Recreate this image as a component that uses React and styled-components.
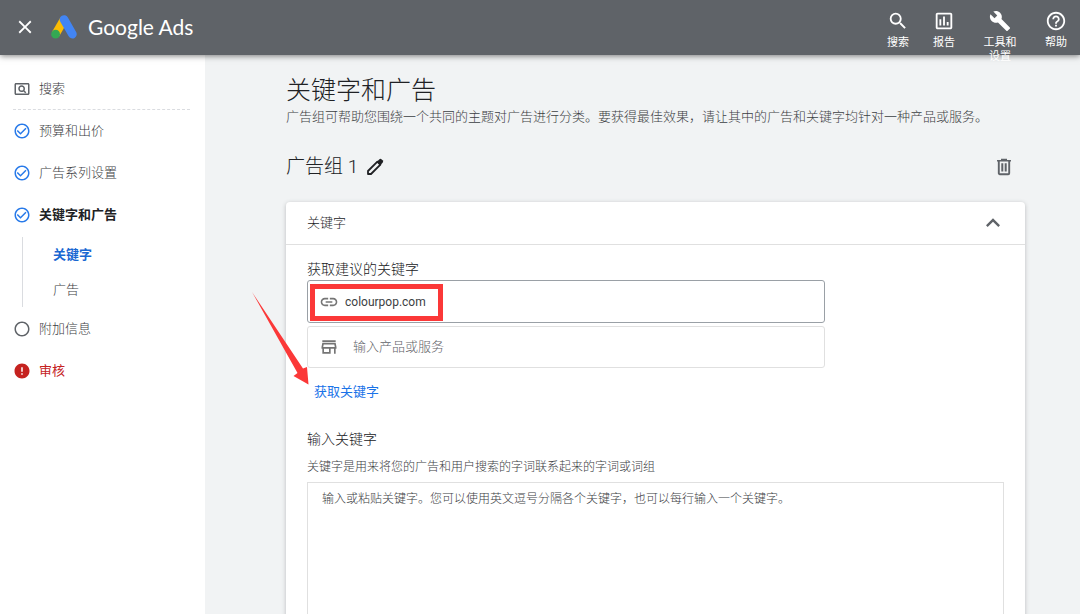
import React from 'react'
import styled, { createGlobalStyle, css } from 'styled-components'
import {
    MdClose,
    MdSearch,
    MdOutlineAssessment,
    MdBuild,
    MdHelpOutline,
    MdOutlinePageview,
    MdCheckCircleOutline,
    MdRadioButtonUnchecked,
    MdError,
    MdLink,
    MdOutlineStore,
    MdExpandLess
} from 'react-icons/md'


const tools = [
    { label: '搜索', Icon: MdSearch },
    { label: '报告', Icon: MdOutlineAssessment },
    { label: '工具和设置', Icon: MdBuild },
    { label: '帮助', Icon: MdHelpOutline }
]

const AdsLogo = () => (
    <svg width="26" height="24" viewBox="0 0 26 24" aria-hidden="true">
        <path d="M13 4.5 L4.6 19.2" stroke="#fbbc04" strokeWidth="8.4" />
        <path d="M13 4.5 L21.4 19.2" stroke="#4285f4" strokeWidth="8.6" strokeLinecap="round" />
        <circle cx="4.6" cy="19.2" r="4.4" fill="#34a853" />
    </svg>
)

const PencilIcon = () => (
    <svg width="18" height="18" viewBox="0 0 18 18" aria-hidden="true">
        <path d="M2 16v-3L11.4 3.6l3 3L5 16z" fill="none" stroke="#202124" strokeWidth="1.8" strokeLinejoin="round" />
        <path d="M10.6 4 13.2 1.4a1.8 1.8 0 0 1 2.5 0l.9.9a1.8 1.8 0 0 1 0 2.5L14 7.4z" fill="#202124" />
    </svg>
)

const TrashIcon = () => (
    <svg width="16" height="18" viewBox="0 0 16 18" fill="none" stroke="#5f6368" aria-hidden="true">
        <path d="M1 2.7h14M5 1.6h6" strokeWidth="1.6" />
        <path d="M2.8 3v12.2a1 1 0 0 0 1 1h8.4a1 1 0 0 0 1-1V3" strokeWidth="1.9" />
        <path d="M6.3 5.2v8.2M9.7 5.2v8.2" strokeWidth="2" />
    </svg>
)

class TopBar extends React.Component{
    render(){
        return(
            <Header>
                <CloseButton type="button" aria-label="关闭"><MdClose size={22}/></CloseButton>
                <AdsLogo/>
                <Brand>Google Ads</Brand>
                <Tools>
                    {tools.map(({ label, Icon }) => (
                        <ToolButton type="button" key={label}>
                            <Icon size={22}/>
                            <span>{label}</span>
                        </ToolButton>
                    ))}
                </Tools>
            </Header>
        )
    }
}

class SideNav extends React.Component{
    render(){
        return(
            <Nav>
                <StepLink href="#search" $divided><MdOutlinePageview size={18} color="#5f6368"/>搜索</StepLink>
                <StepLink href="#budget"><MdCheckCircleOutline size={18} color="#287ae9"/>预算和出价</StepLink>
                <StepLink href="#settings"><MdCheckCircleOutline size={18} color="#287ae9"/>广告系列设置</StepLink>
                <StepLink href="#keywords-ads" $current><MdCheckCircleOutline size={18} color="#287ae9"/>关键字和广告</StepLink>
                <SubSteps>
                    <SubLink href="#keywords" $active>关键字</SubLink>
                    <SubLink href="#ads">广告</SubLink>
                </SubSteps>
                <StepLink href="#extensions"><MdRadioButtonUnchecked size={18} color="#5f6368"/>附加信息</StepLink>
                <StepLink href="#review" $error><MdError size={18} color="#c5221f"/>审核</StepLink>
            </Nav>
        )
    }
}

class KeywordCard extends React.Component{
    state = { url: 'colourpop.com', product: '', keywords: '' }

    handleChange = (e) => {
        this.setState({ [e.target.name]: e.target.value })
    }

    render(){
        const { url, product, keywords } = this.state
        return(
            <Card>
                <CardHeader>
                    <CardTitle>关键字</CardTitle>
                    <IconButton type="button" aria-label="收起"><MdExpandLess size={28} color="#5f6368"/></IconButton>
                </CardHeader>
                <CardBody>
                    <FieldLabel htmlFor="url">获取建议的关键字</FieldLabel>
                    <Suggest>
                        <Field $strong>
                            <MdLink size={20}/>
                            <UrlInput id="url" name="url" value={url} onChange={this.handleChange}/>
                        </Field>
                        <Field $wide>
                            <MdOutlineStore size={20}/>
                            <TextInput name="product" aria-label="输入产品或服务" placeholder="输入产品或服务" value={product} onChange={this.handleChange}/>
                        </Field>
                        <Highlight/>
                        <Arrow width="60" height="96" viewBox="0 0 60 96" aria-hidden="true">
                            <path d="M1 1 L52 77.5 L56 76 L57.5 93.5 L42.5 85 L46.5 82 Z" fill="#fb3838"/>
                        </Arrow>
                    </Suggest>
                    <TextButton type="button">获取关键字</TextButton>
                    <FieldLabel htmlFor="keywords">输入关键字</FieldLabel>
                    <Hint>关键字是用来将您的广告和用户搜索的字词联系起来的字词或词组</Hint>
                    <KeywordArea
                        id="keywords"
                        name="keywords"
                        placeholder="输入或粘贴关键字。您可以使用英文逗号分隔各个关键字，也可以每行输入一个关键字。"
                        value={keywords}
                        onChange={this.handleChange}
                    />
                </CardBody>
            </Card>
        )
    }
}

class App extends React.Component{
    render(){
        return(
            <Page>
                <GlobalStyle/>
                <TopBar/>
                <Content>
                    <SideNav/>
                    <Main>
                        <PageTitle>关键字和广告</PageTitle>
                        <Description>广告组可帮助您围绕一个共同的主题对广告进行分类。要获得最佳效果，请让其中的广告和关键字均针对一种产品或服务。</Description>
                        <GroupRow>
                            <GroupTitle>广告组 1</GroupTitle>
                            <IconButton type="button" aria-label="修改"><PencilIcon/></IconButton>
                            <DeleteButton type="button" aria-label="删除"><TrashIcon/></DeleteButton>
                        </GroupRow>
                        <KeywordCard/>
                    </Main>
                </Content>
            </Page>
        )
    }
}

export default App

const GlobalStyle = createGlobalStyle`
    * {
        box-sizing: border-box;
    }

    body {
        margin: 0;
        font-family: Roboto, "Noto Sans CJK SC", sans-serif;
        font-size: 13px;
        font-weight: 300;
        line-height: 20px;
        color: #3c4043;
    }

    button, input, textarea {
        font: inherit;
        color: inherit;
    }
`

const Page = styled.div`
    display: flex;
    flex-direction: column;
    height: 100vh;
    overflow: hidden;
`

const Header = styled.header`
    position: relative;
    z-index: 1;
    display: flex;
    align-items: center;
    flex: none;
    height: 55px;
    padding: 0 4px 2px 14px;
    background: #5f6368;
    color: #fff;
    box-shadow: 0 1px 6px rgba(0, 0, 0, 0.5);
`

const buttonReset = css`
    display: flex;
    padding: 0;
    border: 0;
    background: none;
    cursor: pointer;
`

const CloseButton = styled.button`
    ${buttonReset}
    margin-right: 15px;
`

const Brand = styled.span`
    margin-left: 11px;
    font-family: Lato, sans-serif;
    font-size: 21px;
    font-weight: 400;
    line-height: 28px;
`

const Tools = styled.div`
    display: flex;
    align-items: flex-start;
    align-self: stretch;
    gap: 6px;
    margin-left: auto;
`

const ToolButton = styled.button`
    ${buttonReset}
    flex-direction: column;
    align-items: center;
    width: 40px;
    padding-top: 10px;
    font-size: 11px;
    font-weight: 400;
    line-height: 14px;

    &:nth-child(n + 3) {
        margin-left: 10px;
    }

    svg {
        flex: none;
    }

    span {
        width: 34px;
        margin-top: 4px;
    }
`

const Content = styled.div`
    display: flex;
    flex: 1;
    min-height: 0;
`

const Nav = styled.nav`
    flex: none;
    width: 205px;
    padding: 13px 15px 0 13px;
    background: #fff;
`

const StepLink = styled.a`
    display: flex;
    align-items: center;
    gap: 8px;
    height: 42px;
    color: ${props => props.$error ? '#c5221f' : props.$current ? '#202124' : '#3c4043'};
    font-weight: ${props => props.$current ? 700 : props.$error ? 400 : 'inherit'};
    text-decoration: none;
    ${props => props.$divided && css`
        border-bottom: 1px dashed #dadce0;
    `}
`

const SubSteps = styled.div`
    margin: 1px 0 1px 9px;
    border-left: 1px solid #dadce0;
`

const SubLink = styled.a`
    display: block;
    padding-left: 30px;
    line-height: 35px;
    color: ${props => props.$active ? '#1967d2' : '#3c4043'};
    font-weight: ${props => props.$active ? 700 : 'inherit'};
    text-decoration: none;
`

const Main = styled.main`
    flex: 1;
    min-width: 0;
    padding: 20px 55px 0 81px;
    background: #f1f3f4;
`

const PageTitle = styled.h1`
    margin: 0;
    font-size: 25px;
    font-weight: inherit;
    line-height: 32px;
    color: #202124;
`

const Description = styled.p`
    margin: 0;
    line-height: 20px;
`

const GroupRow = styled.div`
    display: flex;
    align-items: center;
    gap: 8px;
    height: 30px;
    margin: 25px 0 20px;
`

const GroupTitle = styled.h2`
    margin: 0;
    font-size: 19px;
    font-weight: inherit;
    color: #202124;
`

const IconButton = styled.button`
    ${buttonReset}
`

const DeleteButton = styled(IconButton)`
    margin: 0 13px 0 auto;
`

const Card = styled.section`
    border-radius: 4px;
    background: #fff;
    box-shadow: 0 1px 4px rgba(60, 64, 67, 0.3);
`

const CardHeader = styled.div`
    display: flex;
    align-items: center;
    justify-content: space-between;
    height: 43px;
    padding: 0 18px 0 21px;
    border-bottom: 1px solid #e0e0e0;
`

const CardTitle = styled.h3`
    margin: 0;
    font-size: 13px;
    font-weight: inherit;
    color: #202124;
`

const CardBody = styled.div`
    padding: 14px 21px 21px;
`

const FieldLabel = styled.label`
    display: block;
    font-size: 14px;
    line-height: 20px;
    color: #202124;
`

const Suggest = styled.div`
    position: relative;
    display: flex;
    flex-direction: column;
    gap: 3px;
    max-width: 518px;
    margin-top: 1px;
`

const Field = styled.div`
    display: flex;
    align-items: center;
    gap: ${props => props.$wide ? '14px' : '6px'};
    height: ${props => props.$strong ? '43px' : '42px'};
    padding: 0 11px;
    border: 1px solid ${props => props.$strong ? '#9aa0a6' : '#e0e0e0'};
    border-radius: 3px;
    color: #757575;
`

const TextInput = styled.input`
    flex: 1;
    min-width: 0;
    padding: 0;
    border: 0;
    outline: 0;
    background: none;
    color: #3c4043;

    &::placeholder {
        color: #5f6368;
    }
`

const UrlInput = styled(TextInput)`
    font-size: 12px;
    font-weight: 400;
`

const Highlight = styled.div`
    position: absolute;
    top: 4px;
    left: 3px;
    width: 133px;
    height: 37px;
    border: 5px solid #fb3838;
    pointer-events: none;
`

const Arrow = styled.svg`
    position: absolute;
    top: 11px;
    left: -56px;
    pointer-events: none;
`

const TextButton = styled.button`
    ${buttonReset}
    margin: 14px 7px 27px;
    font-weight: 400;
    line-height: 20px;
    color: #1a73e8;
`

const Hint = styled.p`
    margin: 8px 0 5px;
    font-size: 12px;
    line-height: 20px;
`

const KeywordArea = styled.textarea`
    display: block;
    width: 100%;
    height: 240px;
    padding: 6px 14px;
    border: 1px solid #e0e0e0;
    outline: 0;
    resize: none;
    font-size: 12px;
    line-height: 20px;

    &::placeholder {
        color: #3c4043;
    }
`
